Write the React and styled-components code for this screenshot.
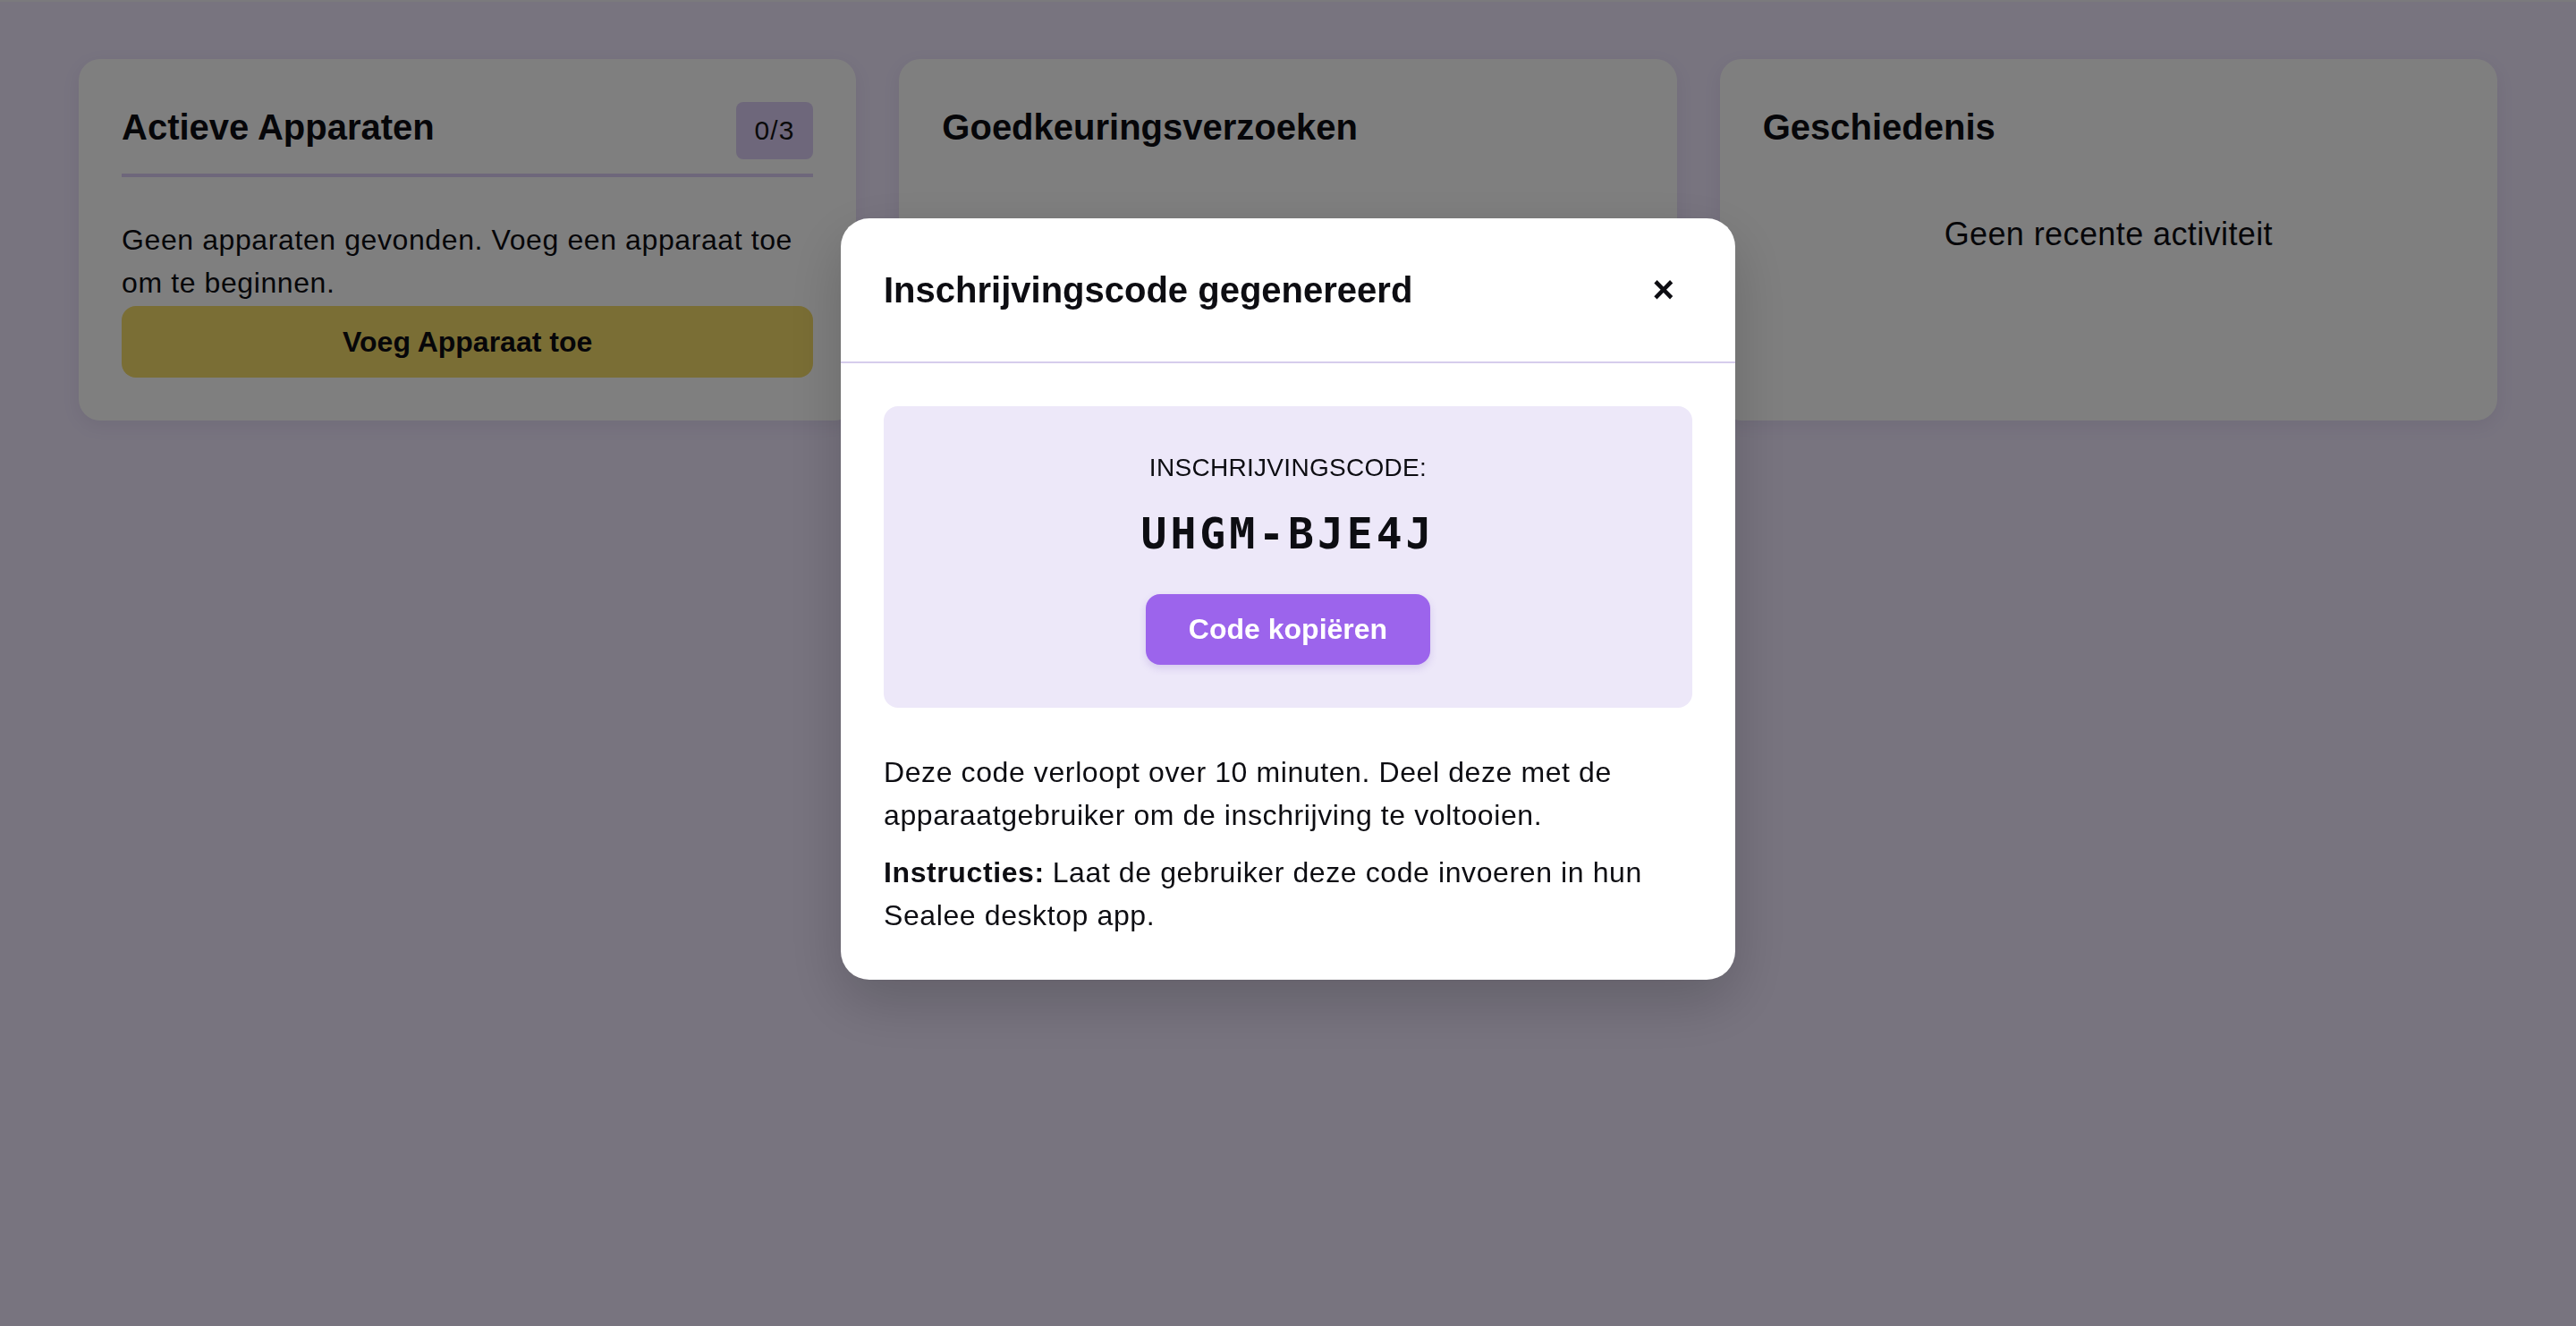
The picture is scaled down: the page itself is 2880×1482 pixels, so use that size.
import React from "react";
import styled, { createGlobalStyle } from "styled-components";

const GlobalStyle = createGlobalStyle`
  *, *::before, *::after { box-sizing: border-box; }
  html, body { margin: 0; padding: 0; }
  body {
    background: #f0e8ff;
    font-family: "Liberation Sans", Arial, sans-serif;
    color: #0d0d12;
    min-height: 100vh;
  }
`;

const Page = styled.main`
  min-height: 100vh;
  border-top: 2px solid #f7f5fb;
  padding: 64px 88px;
`;

const Grid = styled.div`
  display: grid;
  grid-template-columns: repeat(3, 1fr);
  gap: 48px;
`;

const Card = styled.section`
  background: #ffffff;
  border-radius: 24px;
  padding: 48px;
  box-shadow: 0 6px 20px rgba(60, 40, 100, 0.08);
  display: flex;
  flex-direction: column;
`;

const CardHeader = styled.header`
  display: flex;
  justify-content: space-between;
  align-items: flex-start;
  padding-bottom: 16px;
  border-bottom: 4px solid ${(p) => (p.$divided ? "#dccff6" : "transparent")};
`;

const CardTitle = styled.h2`
  margin: 0;
  font-size: 40px;
  font-weight: 700;
  line-height: 56px;
`;

const Badge = styled.span`
  background: #dccff6;
  border-radius: 8px;
  padding: 10px 21px;
  font-size: 30px;
  line-height: 44px;
  letter-spacing: 1px;
  color: #141414;
`;

const CardBody = styled.div`
  margin-top: ${(p) => p.$gap ?? 46}px;
  display: flex;
  flex-direction: column;
`;

const BodyText = styled.p`
  margin: 0;
  font-size: 32px;
  line-height: 48px;
  letter-spacing: 0.6px;
`;

const EmptyText = styled.p`
  margin: 0;
  text-align: center;
  font-size: 36px;
  line-height: 54px;
  letter-spacing: 0.4px;
`;

const PrimaryButton = styled.button`
  margin-top: 2px;
  width: 100%;
  height: 80px;
  border: none;
  border-radius: 16px;
  background: #f4dc6a;
  font-family: inherit;
  font-size: 32px;
  font-weight: 700;
  color: #0d0d12;
  cursor: pointer;
`;

const Overlay = styled.div`
  position: fixed;
  inset: 0;
  background: rgba(0, 0, 0, 0.5);
  display: flex;
  justify-content: center;
  align-items: flex-start;
  padding-top: 244px;
`;

const Modal = styled.div`
  width: 1000px;
  background: #ffffff;
  border-radius: 32px;
  box-shadow: 0 24px 64px rgba(0, 0, 0, 0.18);
  overflow: hidden;
`;

const ModalHeader = styled.div`
  display: flex;
  justify-content: space-between;
  align-items: center;
  padding: 48px;
  border-bottom: 2px solid #d6cdec;
`;

const ModalTitle = styled.h3`
  margin: 0;
  font-size: 40px;
  font-weight: 700;
  line-height: 64px;
`;

const CloseButton = styled.button`
  border: none;
  background: none;
  padding: 0 20px;
  font-family: "Liberation Sans", Arial, sans-serif;
  font-size: 42px;
  font-weight: 700;
  line-height: 1;
  color: #0d0d12;
  cursor: pointer;
`;

const ModalBody = styled.div`
  padding: 48px;
`;

const CodeBox = styled.div`
  background: #ede8f9;
  border-radius: 16px;
  padding: 48px;
  display: flex;
  flex-direction: column;
  align-items: center;
`;

const CodeLabel = styled.div`
  font-size: 28px;
  line-height: 42px;
  letter-spacing: 0.3px;
  text-transform: uppercase;
`;

const CodeValue = styled.div`
  margin: 16px 0 32px;
  font-family: "DejaVu Sans Mono", "Liberation Mono", monospace;
  font-size: 48px;
  font-weight: 700;
  line-height: 72px;
  letter-spacing: 4px;
`;

const CopyButton = styled.button`
  border: none;
  border-radius: 16px;
  background: #9c64ec;
  color: #ffffff;
  padding: 16px 48px;
  font-family: inherit;
  font-size: 32px;
  font-weight: 700;
  line-height: 47px;
  box-shadow: 0 4px 8px rgba(120, 80, 200, 0.2);
  cursor: pointer;
`;

const Note = styled(BodyText)`
  margin-top: ${(p) => p.$gap || 0}px;
`;

const Lead = styled.strong`
  font-weight: 700;
  margin-right: 9px;
`;

export default function App() {
  return (
    <>
      <GlobalStyle />
      <Page>
        <Grid>
          <Card>
            <CardHeader $divided>
              <CardTitle>Actieve Apparaten</CardTitle>
              <Badge>0/3</Badge>
            </CardHeader>
            <CardBody>
              <BodyText>
                Geen apparaten gevonden. Voeg een apparaat toe om te beginnen.
              </BodyText>
              <PrimaryButton>Voeg Apparaat toe</PrimaryButton>
            </CardBody>
          </Card>
          <Card>
            <CardHeader>
              <CardTitle>Goedkeuringsverzoeken</CardTitle>
            </CardHeader>
          </Card>
          <Card>
            <CardHeader>
              <CardTitle>Geschiedenis</CardTitle>
            </CardHeader>
            <CardBody $gap={45}>
              <EmptyText>Geen recente activiteit</EmptyText>
            </CardBody>
          </Card>
        </Grid>
      </Page>
      <Overlay>
        <Modal role="dialog" aria-modal="true">
          <ModalHeader>
            <ModalTitle>Inschrijvingscode gegenereerd</ModalTitle>
            <CloseButton aria-label="Sluiten">×</CloseButton>
          </ModalHeader>
          <ModalBody>
            <CodeBox>
              <CodeLabel>Inschrijvingscode:</CodeLabel>
              <CodeValue>UHGM-BJE4J</CodeValue>
              <CopyButton>Code kopiëren</CopyButton>
            </CodeBox>
            <Note $gap={48}>
              Deze code verloopt over 10 minuten. Deel deze met de
              apparaatgebruiker om de inschrijving te voltooien.
            </Note>
            <Note $gap={16}>
              <Lead>Instructies:</Lead>Laat de gebruiker deze code invoeren in
              hun Sealee desktop app.
            </Note>
          </ModalBody>
        </Modal>
      </Overlay>
    </>
  );
}
